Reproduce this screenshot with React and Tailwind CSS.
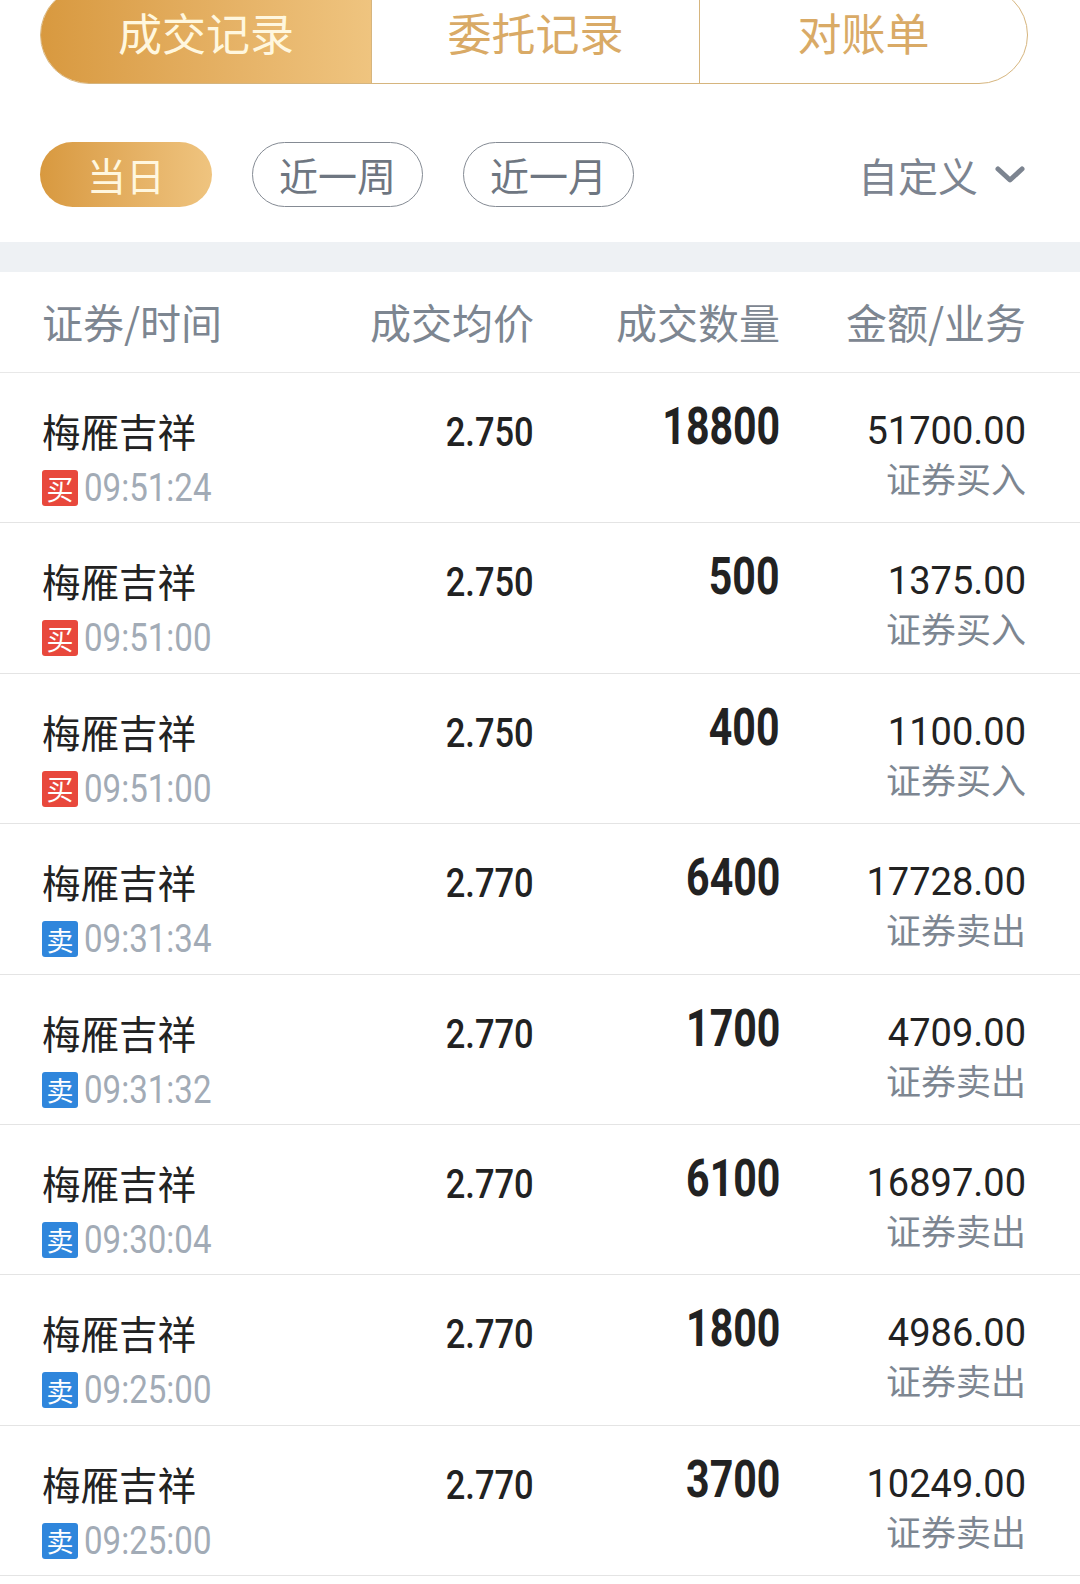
import React from 'react';

const CJK = { fontFamily: '"Noto Sans CJK SC", "Noto Sans", sans-serif' };
const NUM = { fontFamily: 'Roboto, "Liberation Sans", sans-serif' };

const TRADES = [
  { name: '梅雁吉祥', side: 'buy', time: '09:51:24', price: '2.750', qty: '18800', amount: '51700.00' },
  { name: '梅雁吉祥', side: 'buy', time: '09:51:00', price: '2.750', qty: '500', amount: '1375.00' },
  { name: '梅雁吉祥', side: 'buy', time: '09:51:00', price: '2.750', qty: '400', amount: '1100.00' },
  { name: '梅雁吉祥', side: 'sell', time: '09:31:34', price: '2.770', qty: '6400', amount: '17728.00' },
  { name: '梅雁吉祥', side: 'sell', time: '09:31:32', price: '2.770', qty: '1700', amount: '4709.00' },
  { name: '梅雁吉祥', side: 'sell', time: '09:30:04', price: '2.770', qty: '6100', amount: '16897.00' },
  { name: '梅雁吉祥', side: 'sell', time: '09:25:00', price: '2.770', qty: '1800', amount: '4986.00' },
  { name: '梅雁吉祥', side: 'sell', time: '09:25:00', price: '2.770', qty: '3700', amount: '10249.00' },
];

const TradeRow = ({ t }) => {
  const buy = t.side === 'buy';
  return (
    <div className="grid grid-cols-4 h-[150.4px] border-b border-[#e4e4e4] pl-[42px] pr-[54px]">
      <div className="flex flex-col pt-[29px]">
        <span className="text-[38.5px] leading-[56px] text-[#222]" style={CJK}>{t.name}</span>
        <div className="flex items-center mt-[12px] h-[36px]">
          <span
            className={`flex h-[36px] w-[36px] shrink-0 items-center justify-center rounded-[3px] text-[27px] leading-none text-white ${buy ? 'bg-[#e8483c]' : 'bg-[#2f86dc]'}`}
            style={CJK}
          >
            {buy ? '买' : '卖'}
          </span>
          <span className="ml-[6px] inline-block origin-left scale-x-[0.87] whitespace-nowrap text-[38px] leading-none text-[#a2abb6]" style={NUM}>{t.time}</span>
        </div>
      </div>
      <div className="flex justify-end pt-[35px]">
        <span className="inline-block origin-right scale-x-[0.84] text-[41px] leading-[48px] font-medium text-[#222]" style={NUM}>{t.price}</span>
      </div>
      <div className="flex justify-end pt-[24px]">
        <span className="inline-block origin-right scale-x-[0.79] text-[52px] leading-[60px] font-bold text-[#222]" style={NUM}>{t.qty}</span>
      </div>
      <div className="flex flex-col items-end pt-[35px]">
        <span className="text-[38px] leading-[46px] text-[#222]" style={NUM}>{t.amount}</span>
        <span className="text-[35px] leading-[40px] mt-[4px] text-[#7d8691]" style={CJK}>{buy ? '证券买入' : '证券卖出'}</span>
      </div>
    </div>
  );
};

export default function App() {
  return (
    <div className="w-[1080px] h-[1584px] overflow-hidden bg-white" style={CJK}>
      {/* Top tabs */}
      <div className="pl-[40px] pr-[52px]">
        <div className="mt-[-14px] flex h-[98px] overflow-hidden rounded-full border border-[#d6b57e]">
          <div className="flex w-[330px] items-center justify-center bg-gradient-to-r from-[#d8993f] to-[#efc47f] pb-[6px]">
            <span className="text-[44px] text-[#fff7df]">成交记录</span>
          </div>
          <div className="flex w-[328px] items-center justify-center border-l border-[#d6b57e] pb-[6px]">
            <span className="text-[44px] text-[#d9aa66]">委托记录</span>
          </div>
          <div className="flex flex-1 items-center justify-center border-l border-[#d6b57e] pb-[6px]">
            <span className="text-[44px] text-[#d9aa66]">对账单</span>
          </div>
        </div>
      </div>

      {/* Date filters */}
      <div className="mt-[58px] flex h-[65px] items-center pl-[40px] pr-[54px]">
        <div className="flex h-[65px] w-[172px] items-center justify-center rounded-full bg-gradient-to-r from-[#d8993f] to-[#efc47f]">
          <span className="text-[39px] text-[#fff7df]">当日</span>
        </div>
        <div className="ml-[40px] flex h-[65px] w-[171px] items-center justify-center rounded-full border-[1.5px] border-[#858b94]">
          <span className="text-[39px] text-[#6e7681]">近一周</span>
        </div>
        <div className="ml-[40px] flex h-[65px] w-[171px] items-center justify-center rounded-full border-[1.5px] border-[#858b94]">
          <span className="text-[39px] text-[#6e7681]">近一月</span>
        </div>
        <div className="ml-auto flex items-center">
          <span className="text-[40px] text-[#7c8490]">自定义</span>
          <svg className="ml-[16px]" width="32" height="22" viewBox="0 0 32 22" fill="none">
            <path d="M4 5 L16 16 L28 5" stroke="#7c8490" strokeWidth="5" strokeLinecap="round" strokeLinejoin="round" />
          </svg>
        </div>
      </div>

      <div className="mt-[35px] h-[30px] bg-[#eef1f4]" />

      {/* Header */}
      <div className="grid grid-cols-4 h-[101px] items-center border-b border-[#e8e8e8] pl-[42px] pr-[54px] text-[41px] text-[#7d8691]">
        <span>证券/时间</span>
        <span className="text-right">成交均价</span>
        <span className="text-right">成交数量</span>
        <span className="text-right">金额/业务</span>
      </div>

      {TRADES.map((t, i) => (
        <TradeRow key={i} t={t} />
      ))}
    </div>
  );
}
